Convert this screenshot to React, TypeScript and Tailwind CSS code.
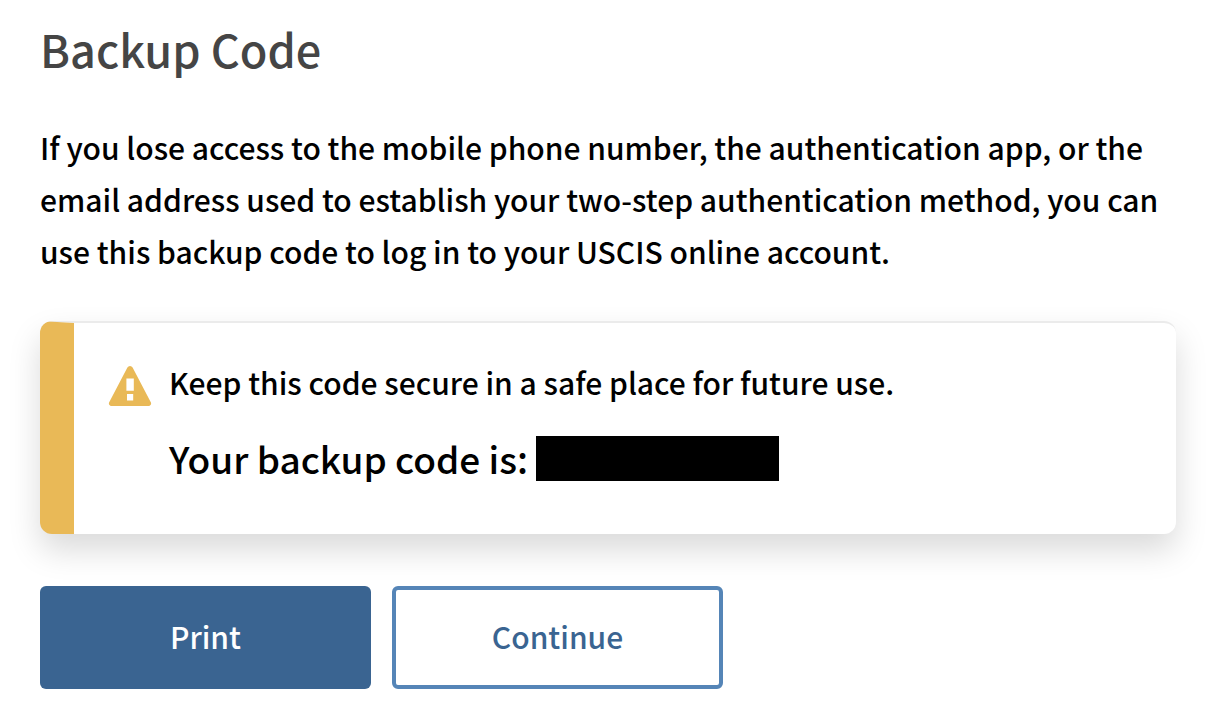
import React from 'react';

function WarningIcon() {
  return (
    <svg viewBox="0 0 44 40" className="mt-[10px] h-10 w-11 shrink-0 text-[#e9b957]" fill="currentColor" aria-hidden="true">
      <path
        fillRule="evenodd"
        d="M19.4 1.6a3 3 0 0 1 5.2 0l18.2 34.6a2.6 2.6 0 0 1-2.3 3.8h-37a2.6 2.6 0 0 1-2.3-3.8ZM18.4 12.4v12.4h7.4V12.4ZM19 28v6.6h6.2V28Z"
      />
    </svg>
  );
}

export default function App() {
  return (
    <main className="bg-white pt-[17px] pr-[34px] pb-10 pl-10 font-['Noto_Sans_CJK_SC',sans-serif] text-[30px] leading-[52px] font-medium text-black">
      <h1 className="mb-10 text-[45px] leading-[64px] font-medium text-[#454545]">Backup Code</h1>

      <p className="mb-11">
        If you lose access to the mobile phone number, the authentication app, or the email address used to establish
        your two-step authentication method, you can use this backup code to log in to your USCIS online account.
      </p>

      <section className="flex gap-[17px] rounded-xl border-t-2 border-l-[34px] border-t-[#ebebeb] border-l-[#e9b957] bg-white pt-[33px] pb-[42px] pl-[34px] shadow-[0_16px_32px_rgba(0,0,0,0.15)]">
        <WarningIcon />
        <div>
          <p className="mb-4">Keep this code secure in a safe place for future use.</p>
          <p className="flex items-center gap-2 text-[37px] leading-[68px]">
            Your backup code is:
            <span className="h-[45px] w-[243px] bg-black" />
          </p>
        </div>
      </section>

      <div className="mt-[52px] flex gap-[21px]">
        <button type="button" className="h-[103px] w-[331px] rounded-md bg-[#3a6491] pb-1 text-white">
          Print
        </button>
        <button type="button" className="h-[103px] w-[331px] rounded-md border-4 border-[#5585b7] bg-white pb-1 text-[#3a6491]">
          Continue
        </button>
      </div>
    </main>
  );
}
